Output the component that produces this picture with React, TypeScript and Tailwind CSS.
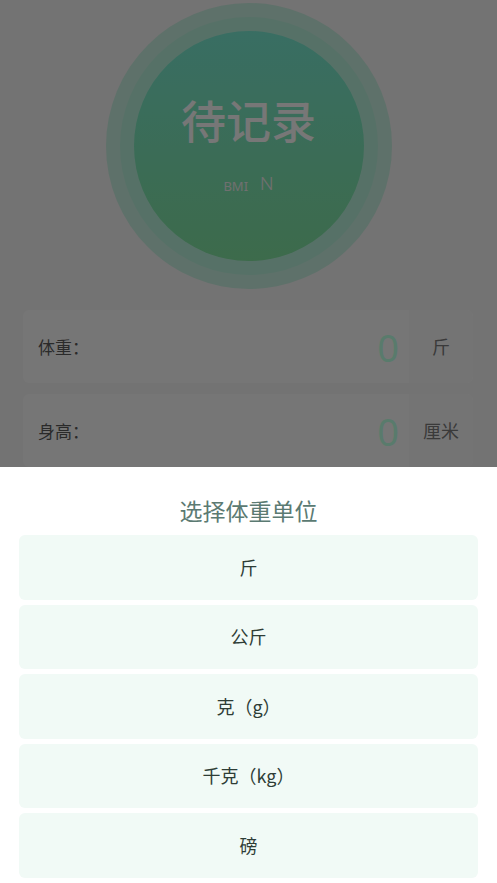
import React from "react";

const font = { fontFamily: '"Noto Sans CJK SC", "Noto Sans", sans-serif' };

export default function App() {
  const units = ["斤", "公斤", "克（g）", "千克（kg）", "磅"];
  return (
    <div className="relative min-h-[883px] w-full overflow-hidden bg-[#e6e6e6]" style={font}>
      {/* page content */}
      <div className="flex flex-col items-center pt-[3px]">
        <div className="flex h-[286px] w-[286px] items-center justify-center rounded-full bg-[#bde2d4]">
          <div className="flex h-[258px] w-[258px] items-center justify-center rounded-full bg-[#ade3cf]">
            <div className="flex h-[230px] w-[230px] flex-col items-center rounded-full bg-gradient-to-b from-[#72dcc6] to-[#7ad697] pt-[62px]">
              <div className="text-[45px] leading-[54px] font-medium text-[#efefef]">待记录</div>
              <div className="mt-[27px] flex items-end gap-[12px] text-[#e0e0e0]">
                <span className="text-[13px] leading-[16px]" style={{ fontFamily: '"Noto Sans", sans-serif' }}>BMI</span>
                <span className="text-[19px] leading-[20px] font-light" style={{ fontFamily: 'Roboto, sans-serif' }}>N</span>
              </div>
            </div>
          </div>
        </div>
      </div>
      <div className="mt-[21px] flex flex-col gap-[11px] pl-[23px] pr-[24px]">
        {[
          ["体重：", "斤"],
          ["身高：", "厘米"],
          ["年龄：", "岁"],
        ].map(([label, unit]) => (
          <div key={label} className="flex h-[73px] items-center rounded-[6px] bg-[#ededed]">
            <div className="flex-1 pl-[15px] text-[17px] text-[#555555]">{label}</div>
            <div className="pr-[10px] text-[38px] leading-none text-[#b2f6d8]" style={{ fontFamily: '"Noto Sans", sans-serif' }}>0</div>
            <div className="flex h-full w-[64px] items-center justify-center rounded-r-[6px] bg-[#e9e9e9] text-[18px] text-[#747474]">{unit}</div>
          </div>
        ))}
      </div>

      {/* modal */}
      <div className="fixed inset-0 flex flex-col">
        <div className="flex-1 bg-black/50" />
        <div className="flex h-[416px] flex-col bg-white">
          <div className="pt-[28px] pb-[10px] text-center text-[23px] leading-[30px] text-[#5b7a72]">选择体重单位</div>
          <div className="flex flex-col gap-[5px] pl-[19px] pr-[19px]">
            {units.map((u) => (
              <div key={u} className="flex h-[64.5px] items-center justify-center rounded-[6px] bg-[#f1faf6] text-[18px] text-[#2e3d36]">
                {u}
              </div>
            ))}
          </div>
        </div>
      </div>
    </div>
  );
}
